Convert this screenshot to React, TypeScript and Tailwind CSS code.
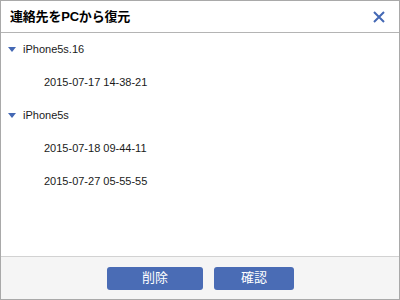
import { useState } from 'react';

const GROUPS = [
  { name: 'iPhone5s.16', items: ['2015-07-17 14-38-21'] },
  { name: 'iPhone5s', items: ['2015-07-18 09-44-11', '2015-07-27 05-55-55'] },
];

const FONT = { fontFamily: '"Liberation Sans", "Noto Sans CJK JP", sans-serif' };

export default function App() {
  const [selected, setSelected] = useState<string | null>(null);

  return (
    <div
      className="w-[400px] h-[300px] flex flex-col bg-white border border-[#a9a9a9] text-[#1a1a1a]"
      style={FONT}
    >
      {/* Title bar */}
      <div className="h-[32px] shrink-0 flex items-center justify-between pl-[9px] pr-[14px] border-b border-[#b4b4b4]">
        <span className="text-[13px] font-bold tracking-[-0.2px] text-black">連絡先をPCから復元</span>
        <button className="w-[12px] h-[12px] flex items-center justify-center">
          <svg width="12" height="12" viewBox="0 0 12 12">
            <path d="M1 1 L11 11 M11 1 L1 11" stroke="#4468b4" strokeWidth="2" />
          </svg>
        </button>
      </div>

      {/* Tree */}
      <div className="flex-1 flex flex-col text-[11px]">
        {GROUPS.map((g) => (
          <div key={g.name} className="flex flex-col">
            <div className="h-[33px] flex items-center gap-[7px] pl-[7px]">
              <svg width="8" height="5" viewBox="0 0 8 5">
                <path d="M0 0 L8 0 L4 5 Z" fill="#4468b4" />
              </svg>
              <span>{g.name}</span>
            </div>
            {g.items.map((d) => (
              <div
                key={d}
                onClick={() => setSelected(d)}
                className={
                  'h-[33px] flex items-center pl-[43px] ' + (selected === d ? 'bg-[#e6eefa]' : '')
                }
              >
                {d}
              </div>
            ))}
          </div>
        ))}
      </div>

      {/* Footer */}
      <div className="h-[43px] shrink-0 flex items-center justify-center gap-[11px] pl-[1px] bg-[#f5f5f5] border-t border-[#d2d2d2]">
        <button className="w-[96px] h-[23px] rounded-[3px] bg-[#4a6cb5] text-white text-[13px]">削除</button>
        <button className="w-[80px] h-[23px] rounded-[3px] bg-[#4a6cb5] text-white text-[13px]">確認</button>
      </div>
    </div>
  );
}
